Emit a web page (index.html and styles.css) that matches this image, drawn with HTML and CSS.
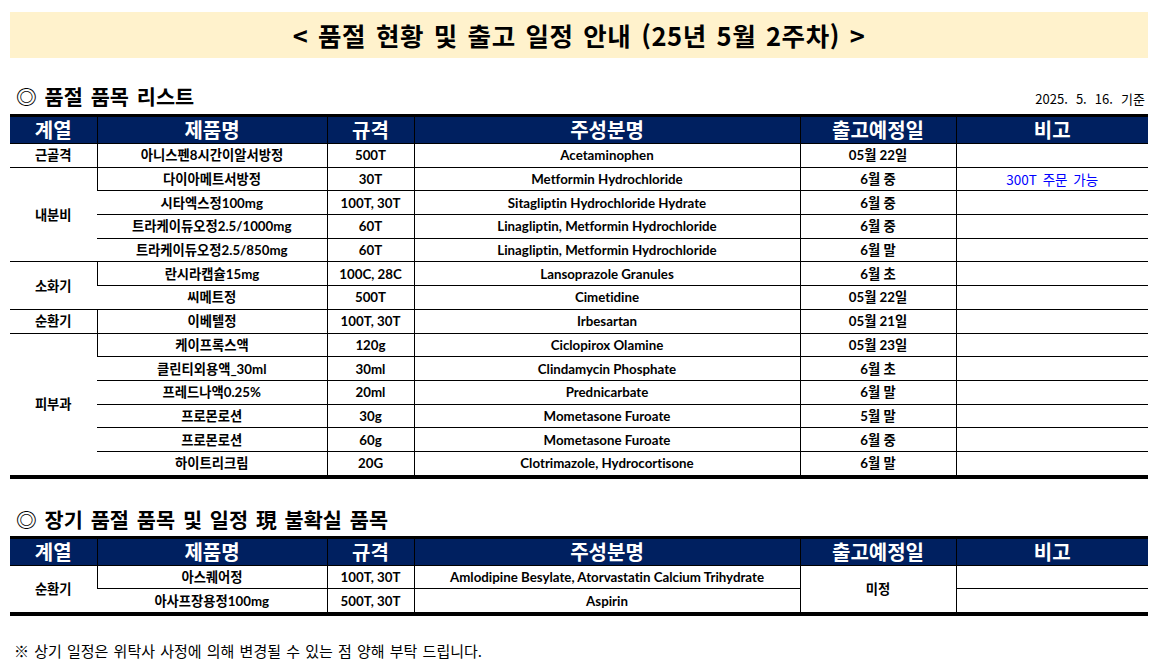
FILE: index.html
```html
<!DOCTYPE html>
<html lang="ko">
<head>
<meta charset="utf-8">
<link rel="stylesheet" href="styles.css">
</head>
<body>
<div class="page">
  <div class="banner">&lt; 품절 현황 및 출고 일정 안내 (25년 5월 2주차) &gt;</div>

  <div class="section-head first">
    <h2 class="section-title">◎ 품절 품목 리스트</h2>
    <span class="asof">2025. 5. 16. 기준</span>
  </div>
  <table class="grid">
    <colgroup>
      <col class="c1"><col class="c2"><col class="c3"><col class="c4"><col class="c5"><col class="c6">
    </colgroup>
    <thead>
      <tr><th>계열</th><th>제품명</th><th>규격</th><th>주성분명</th><th>출고예정일</th><th>비고</th></tr>
    </thead>
    <tbody>
      <tr><td>근골격</td><td>아니스펜8시간이알서방정</td><td>500T</td><td>Acetaminophen</td><td>05월 22일</td><td></td></tr>
      <tr><td rowspan="4">내분비</td><td>다이아메트서방정</td><td>30T</td><td>Metformin Hydrochloride</td><td>6월 중</td><td class="note">300T 주문 가능</td></tr>
      <tr><td>시타엑스정100mg</td><td>100T, 30T</td><td>Sitagliptin Hydrochloride Hydrate</td><td>6월 중</td><td></td></tr>
      <tr><td>트라케이듀오정2.5/1000mg</td><td>60T</td><td>Linagliptin, Metformin Hydrochloride</td><td>6월 중</td><td></td></tr>
      <tr><td>트라케이듀오정2.5/850mg</td><td>60T</td><td>Linagliptin, Metformin Hydrochloride</td><td>6월 말</td><td></td></tr>
      <tr><td rowspan="2">소화기</td><td>란시라캡슐15mg</td><td>100C, 28C</td><td>Lansoprazole Granules</td><td>6월 초</td><td></td></tr>
      <tr><td>씨메트정</td><td>500T</td><td>Cimetidine</td><td>05월 22일</td><td></td></tr>
      <tr><td>순환기</td><td>이베텔정</td><td>100T, 30T</td><td>Irbesartan</td><td>05월 21일</td><td></td></tr>
      <tr><td rowspan="6">피부과</td><td>케이프록스액</td><td>120g</td><td>Ciclopirox Olamine</td><td>05월 23일</td><td></td></tr>
      <tr><td>클린티외용액_30ml</td><td>30ml</td><td>Clindamycin Phosphate</td><td>6월 초</td><td></td></tr>
      <tr><td>프레드나액0.25%</td><td>20ml</td><td>Prednicarbate</td><td>6월 말</td><td></td></tr>
      <tr><td>프로몬로션</td><td>30g</td><td>Mometasone Furoate</td><td>5월 말</td><td></td></tr>
      <tr><td>프로몬로션</td><td>60g</td><td>Mometasone Furoate</td><td>6월 중</td><td></td></tr>
      <tr><td>하이트리크림</td><td>20G</td><td>Clotrimazole, Hydrocortisone</td><td>6월 말</td><td></td></tr>
    </tbody>
  </table>

  <div class="section-head second">
    <h2 class="section-title">◎ 장기 품절 품목 및 일정 現 불확실 품목</h2>
  </div>
  <table class="grid">
    <colgroup>
      <col class="c1"><col class="c2"><col class="c3"><col class="c4"><col class="c5"><col class="c6">
    </colgroup>
    <thead>
      <tr><th>계열</th><th>제품명</th><th>규격</th><th>주성분명</th><th>출고예정일</th><th>비고</th></tr>
    </thead>
    <tbody>
      <tr><td rowspan="2">순환기</td><td>아스퀘어정</td><td>100T, 30T</td><td>Amlodipine Besylate, Atorvastatin Calcium Trihydrate</td><td rowspan="2" class="plain">미정</td><td></td></tr>
      <tr><td>아사프장용정100mg</td><td>500T, 30T</td><td>Aspirin</td><td></td></tr>
    </tbody>
  </table>

  <p class="footnote">※ 상기 일정은 위탁사 사정에 의해 변경될 수 있는 점 양해 부탁 드립니다.</p>
</div>
</body>
</html>
```
FILE: styles.css
```css
html, body {
  margin: 0;
  padding: 0;
  background: #ffffff;
}

body {
  font-family: "Lato", "Noto Sans CJK KR", sans-serif;
  font-variant-ligatures: none;
  color: #000000;
}

.page {
  width: 1138px;
  padding: 12px 0 0 10px;
}

.banner {
  height: 46px;
  background: #fff2cc;
  display: flex;
  align-items: center;
  justify-content: center;
  font-family: "Noto Sans CJK KR", sans-serif;
  font-weight: 700;
  font-size: 25.5px;
  letter-spacing: 0.6px;
  word-spacing: 2px;
  padding-bottom: 1px;
  box-sizing: border-box;
}

.section-head {
  display: flex;
  align-items: center;
  justify-content: space-between;
  height: 24px;
  margin-bottom: 6px;
}

.section-head.first {
  margin-top: 26px;
}

.section-head.second {
  margin-top: 28px;
  margin-bottom: 5px;
}

.section-title {
  margin: 0 0 0 6px;
  font-family: "Noto Sans CJK KR", sans-serif;
  font-weight: 700;
  font-size: 20.8px;
  line-height: 24px;
  word-spacing: 2px;
}

.asof {
  font-family: "Noto Sans CJK KR", sans-serif;
  font-size: 13px;
  word-spacing: 4.5px;
  margin-right: 3px;
  padding-top: 4px;
}

.grid {
  width: 1138px;
  border-collapse: collapse;
  table-layout: fixed;
  border-top: 3px solid #000;
  border-bottom: 4px solid #000;
}

.c1 { width: 87px; }
.c2 { width: 230px; }
.c3 { width: 87px; }
.c4 { width: 386px; }
.c5 { width: 156px; }
.c6 { width: 192px; }

.grid th {
  background: #002060;
  color: #ffffff;
  font-family: "Noto Sans CJK KR", sans-serif;
  font-weight: 700;
  font-size: 20px;
  height: 26px;
  padding: 0;
  line-height: 26px;
  border-left: 1px solid #000;
  border-bottom: 1px solid #000;
}

.grid th:first-child {
  border-left: none;
}

.grid td {
  height: 22.7px;
  padding: 0;
  text-align: center;
  font-size: 13.3px;
  font-weight: 700;
  line-height: 16px;
  border-left: 1px solid #000;
  border-top: 1px solid #000;
  white-space: nowrap;
}

.grid tbody tr td:first-child {
  border-left: none;
}

.grid tbody tr td[rowspan] + td {
  border-left: 1px solid #000;
}

.grid td.plain {
  border-left: 1px solid #000;
}

.grid td.note {
  color: #0000ff;
  font-weight: 400;
  font-family: "Noto Sans CJK KR", sans-serif;
  font-size: 13.5px;
  word-spacing: 2px;
}

.footnote {
  margin: 24px 0 0 4px;
  font-family: "Noto Sans CJK KR", sans-serif;
  font-size: 15px;
  word-spacing: 1px;
}
```
